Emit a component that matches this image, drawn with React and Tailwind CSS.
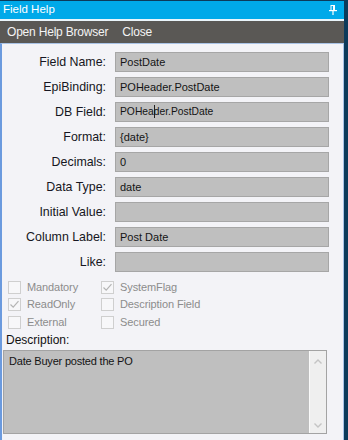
import React from "react";

const font = { fontFamily: '"Liberation Sans", Arial, sans-serif' };

const rows = [
  ["Field Name:", "PostDate"],
  ["EpiBinding:", "POHeader.PostDate"],
  ["DB Field:", "cursor"],
  ["Format:", "{date}"],
  ["Decimals:", "0"],
  ["Data Type:", "date"],
  ["Initial Value:", ""],
  ["Column Label:", "Post Date"],
  ["Like:", ""],
];

function Check({ checked }) {
  return (
    <div className="w-[13px] h-[13px] border border-[#cfcfcf] bg-[#f7f7f9] flex items-center justify-center shrink-0">
      {checked && (
        <svg width="11" height="11" viewBox="0 0 11 11">
          <path d="M1.5 5.5 L4.2 8.2 L9.5 2.2" fill="none" stroke="#b4b4b4" strokeWidth="1.2" />
        </svg>
      )}
    </div>
  );
}

function CheckItem({ label, checked }) {
  return (
    <div className="flex items-start gap-[6px]">
      <Check checked={checked} />
      <span className="text-[11px] leading-[13px] tracking-[-0.1px] text-[#8c8c8c]">{label}</span>
    </div>
  );
}

export default function App() {
  return (
    <div className="w-[348px] h-[440px] bg-[#0c3a5a] overflow-hidden" style={font}>
      <div className="w-[344px] mt-[1px] flex flex-col h-[439px]">
        <div className="h-[18px] bg-[#00a9e9] flex items-center justify-between pl-[3px] pr-[7px] text-white text-[11.5px]">
          <span>Field Help</span>
          <svg width="8" height="10" viewBox="0 0 8 10">
            <rect x="2" y="0.5" width="3.5" height="5" fill="none" stroke="#fff" strokeWidth="1" />
            <rect x="4" y="0.5" width="1.5" height="5" fill="#fff" />
            <rect x="0" y="5" width="8" height="1.2" fill="#fff" />
            <rect x="3.4" y="6" width="1.2" height="4" fill="#fff" />
          </svg>
        </div>
        <div className="h-[2px] bg-[#eaf5fb]" />
        <div className="h-[22px] bg-[#5a5855] flex items-center pl-[7px] gap-[14px] text-[12px] tracking-[-0.2px] text-[#f4f4f4]">
          <span>Open Help Browser</span>
          <span>Close</span>
        </div>
        <div className="flex-1 bg-[#f3f3f7] border-l-2 border-l-[#6b9ade] border-t border-t-[#a9c3e6] border-r border-r-[#a9c3e6] pt-[8px]">
          <div className="flex flex-col gap-[5px]">
            {rows.map(([label, value]) => (
              <div key={label} className="flex items-center h-[20px]">
                <div className="w-[104px] text-right text-[12.4px] text-[#161622]">{label}</div>
                <div className="ml-[9px] w-[214px] h-[20px] bg-[#bfbfbf] border border-[#a6a6a6] flex items-center pl-[4px] text-[11px] text-[#141414]">
                  {value === "cursor" ? (
                    <span className="text-[10.3px]">
                      POHea
                      <span className="inline-block w-px h-[13px] bg-[#222] align-[-3px] -mr-px" />
                      der.PostDate
                    </span>
                  ) : (
                    value
                  )}
                </div>
              </div>
            ))}
          </div>
          <div className="mt-[9px] pl-[6px] grid grid-cols-[93px_1fr]">
            <div className="h-[17px]"><CheckItem label="Mandatory" /></div>
            <div className="h-[17px]"><CheckItem label="SystemFlag" checked /></div>
            <div className="h-[18px]"><CheckItem label="ReadOnly" checked /></div>
            <div className="h-[18px]"><CheckItem label="Description Field" /></div>
            <div className="h-[17px]"><CheckItem label="External" /></div>
            <div className="h-[17px]"><CheckItem label="Secured" /></div>
          </div>
          <div className="pl-[4px] text-[12px] leading-[15px] text-[#111]">Description:</div>
          <div className="ml-[1px] mt-[2px] w-[324px] h-[84px] border border-[#a3a3a3] bg-[#bfbfbf] flex">
            <div className="flex-1 pl-[5px] pt-[3px] text-[11px] tracking-[-0.2px] text-[#141414] leading-[14px]">
              Date Buyer posted the PO
            </div>
            <div className="w-[17px] h-full bg-[#efefef] border-l border-l-[#fafafa] flex flex-col items-center justify-between pt-[8px] pb-[5px]">
              <svg width="8" height="5" viewBox="0 0 8 5">
                <path d="M0.5 4.5 L4 1 L7.5 4.5" fill="none" stroke="#c4c4c4" strokeWidth="1.4" />
              </svg>
              <svg width="8" height="5" viewBox="0 0 8 5">
                <path d="M0.5 0.5 L4 4 L7.5 0.5" fill="none" stroke="#c4c4c4" strokeWidth="1.4" />
              </svg>
            </div>
          </div>
        </div>
      </div>
    </div>
  );
}
